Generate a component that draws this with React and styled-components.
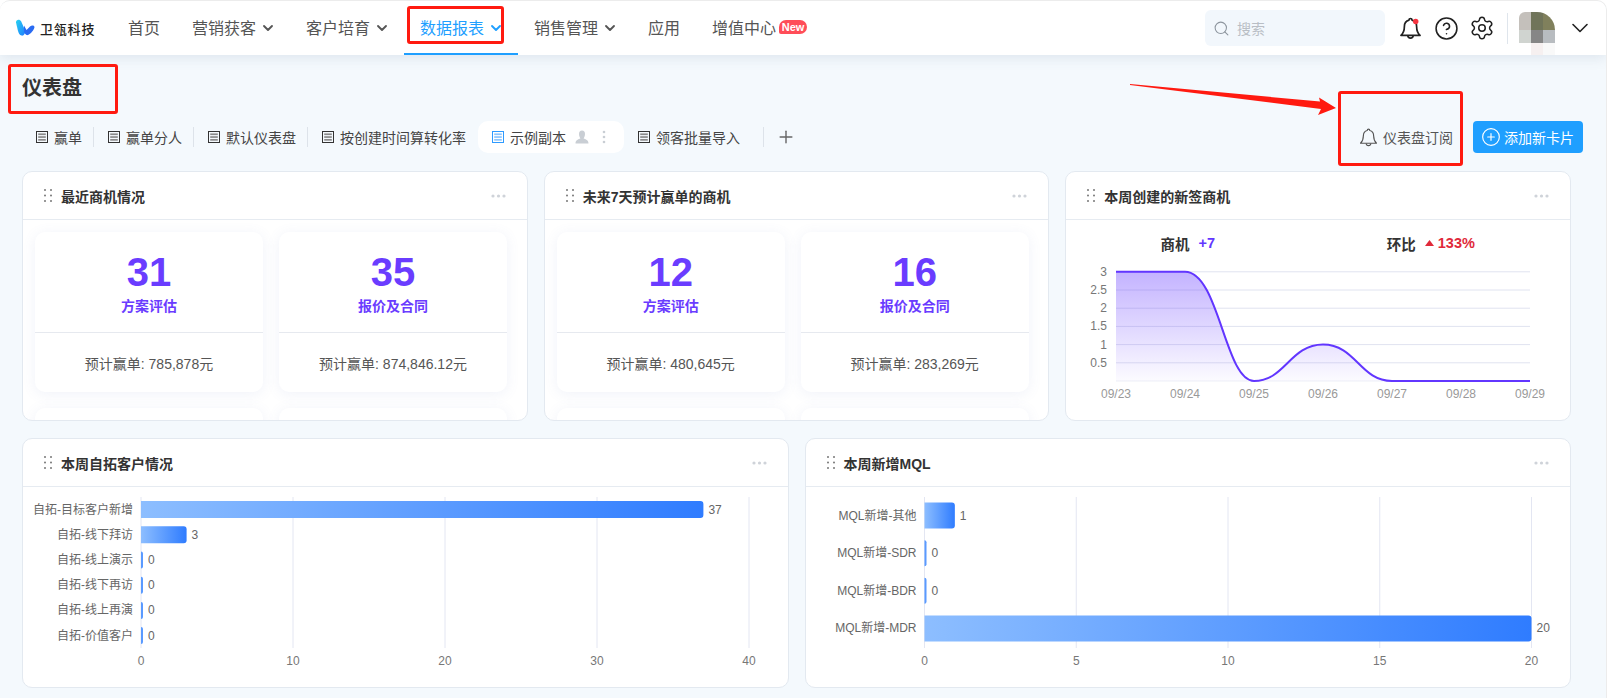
import React from "react";
import styled, { createGlobalStyle } from "styled-components";
import { ChevronDown, CircleHelp, CirclePlus, Plus, Search, Settings } from "lucide-react";

const FONT = '"Liberation Sans", "Noto Sans CJK SC", sans-serif';

const GlobalStyle = createGlobalStyle`
  html, body {
    margin: 0;
    padding: 0;
    background: #fff;
    font-family: ${FONT};
    overflow: hidden;
  }
  * { box-sizing: border-box; }
`;

const navItems = [
  { label: "首页" },
  { label: "营销获客", arrow: true },
  { label: "客户培育", arrow: true },
  { label: "数据报表", arrow: true, active: true },
  { label: "销售管理", arrow: true },
  { label: "应用" },
  { label: "增值中心", badge: "New" }
];

const tabs = [
  { label: "赢单", divider: true },
  { label: "赢单分人", divider: true },
  { label: "默认仪表盘", divider: true },
  { label: "按创建时间算转化率" },
  { label: "示例副本", active: true },
  { label: "领客批量导入" }
];

const recent = [
  { value: 31, stage: "方案评估", amount: "785,878" },
  { value: 35, stage: "报价及合同", amount: "874,846.12" },
  {},
  {}
];

const nextWeek = [
  { value: 12, stage: "方案评估", amount: "480,645" },
  { value: 16, stage: "报价及合同", amount: "283,269" },
  {},
  {}
];

const selfDev = [
  ["自拓-目标客户新增", 37],
  ["自拓-线下拜访", 3],
  ["自拓-线上演示", 0],
  ["自拓-线下再访", 0],
  ["自拓-线上再演", 0],
  ["自拓-价值客户", 0]
];

const mql = [
  ["MQL新增-其他", 1],
  ["MQL新增-SDR", 0],
  ["MQL新增-BDR", 0],
  ["MQL新增-MDR", 20]
];

const Frame = styled.div`
  position: relative;
  width: 1607px;
  height: 698px;
  overflow: hidden;
  background: #f4f9fd;
  border-top: 1px solid #ececec;
  border-right: 1px solid #ececec;
  border-radius: 10px 10px 0 0;
`;

const TopNav = styled.header`
  position: relative;
  z-index: 2;
  display: flex;
  align-items: center;
  height: 54px;
  padding-left: 15px;
  padding-right: 16px;
  background: #fff;
  box-shadow: 0 3px 12px rgba(80, 100, 130, 0.13);
`;

const Brand = styled.div`
  display: flex;
  align-items: center;
  gap: 5px;
  width: 97px;
  font-size: 13px;
  font-weight: 500;
  letter-spacing: 0.8px;
  color: #222;
`;

const NavItem = styled.div`
  display: flex;
  align-items: center;
  height: 54px;
  padding: 0 16px;
  font-size: 16px;
  color: ${(p) => (p.$active ? "#1f9fff" : "#555")};
  border-bottom: 2px solid ${(p) => (p.$active ? "#1f9fff" : "transparent")};
`;

const NavArrow = styled(ChevronDown)`
  flex: none;
  margin: 2px -2px 0 4px;
`;

const NewBadge = styled.span`
  display: flex;
  align-items: center;
  justify-content: center;
  width: 28px;
  height: 14px;
  margin-left: 3px;
  margin-right: -31px;
  border-radius: 7px 7px 7px 2px;
  background: #ff4d58;
  color: #fff;
  font-size: 11px;
  font-weight: 700;
`;

const SearchBox = styled.div`
  display: flex;
  align-items: center;
  gap: 7px;
  width: 180px;
  height: 36px;
  margin-left: auto;
  padding-left: 8px;
  border-radius: 6px;
  background: #f2f7fc;
  color: #b9bec5;
  font-size: 14px;
`;

const IconSlot = styled.div`
  display: flex;
  align-items: center;
  justify-content: center;
  width: 22px;
  height: 22px;
  margin-left: 14px;
  color: #222;

  svg {
    flex: none;
  }
`;

const NavDivider = styled.div`
  width: 1px;
  height: 31px;
  margin-left: 14px;
  background: #dfe5ec;
`;

const Avatar = styled.div`
  display: grid;
  grid-template-columns: repeat(3, 12px);
  grid-template-rows: 18px 13px 12px;
  align-self: flex-end;
  height: 43px;
  margin-left: 11px;
  overflow: hidden;
  border-radius: 6px 18px 0 0;
`;

const AvatarCell = styled.div`
  background: ${(p) => p.$color};
`;

const ChevronSlot = styled.div`
  display: flex;
  justify-content: center;
  width: 20px;
  margin-left: 15px;
  color: #222;

  svg {
    flex: none;
  }
`;

const Main = styled.main`
  padding: 19px 23px 0 22px;
`;

const Heading = styled.h1`
  margin: 0;
  height: 28px;
  line-height: 28px;
  font-size: 20px;
  font-weight: 700;
  color: #333;
`;

const TabRow = styled.div`
  display: flex;
  align-items: center;
  height: 32px;
  margin-top: 19px;
`;

const Tab = styled.div`
  display: flex;
  align-items: center;
  gap: 6px;
  height: 32px;
  margin-left: ${(p) => (p.$active ? "1px" : "0")};
  padding: 0 ${(p) => (p.$active ? "0" : "11px")} 0 14px;
  width: ${(p) => (p.$active ? "146px" : "auto")};
  border-radius: 10px;
  background: ${(p) => (p.$active ? "#fff" : "transparent")};
  font-size: 14px;
  color: #444;
`;

const TabDivider = styled.div`
  width: 1px;
  height: 20px;
  margin-left: ${(p) => p.$gap || 0}px;
  background: #dde3ea;
`;

const TabTools = styled.div`
  display: flex;
  align-items: center;
  margin-left: 3px;
  gap: 13px;
`;

const AddTab = styled(Plus)`
  flex: none;
  margin-left: 12px;
  color: #666;
`;

const Subscribe = styled.div`
  display: flex;
  align-items: center;
  gap: 4px;
  margin-left: auto;
  font-size: 14px;
  color: #555;
`;

const AddButton = styled.button`
  display: flex;
  align-items: center;
  gap: 3px;
  width: 110px;
  height: 32px;
  margin-left: 20px;
  padding: 0 0 0 8px;
  border: 0;
  border-radius: 4px;
  background: #1f9fff;
  color: #fff;
  font-family: inherit;
  font-size: 14px;
`;

const CardRow = styled.section`
  display: grid;
  grid-template-columns: repeat(${(p) => p.$cols}, 1fr);
  gap: 16px;
  height: 250px;
  margin: ${(p) => p.$top}px 12px 0 0;
`;

const Card = styled.article`
  display: flex;
  flex-direction: column;
  min-width: 0;
  overflow: hidden;
  border: 1px solid #e3e9f0;
  border-radius: 10px;
  background: #fff;
`;

const CardHeader = styled.div`
  display: flex;
  flex: none;
  align-items: center;
  gap: 9px;
  height: 48px;
  padding: 0 21px 0 21px;
  border-bottom: 1px solid #e6ebf1;
`;

const CardTitle = styled.h3`
  flex: 1;
  margin: 0;
  font-size: 14px;
  font-weight: 700;
  color: #333;
`;

const TileGrid = styled.div`
  display: grid;
  grid-template-columns: 228px 228px;
  gap: 16px;
  padding: 12px;
`;

const Tile = styled.div`
  height: 160px;
  border-radius: 10px;
  background: #fff;
  box-shadow: 0 2px 14px rgba(90, 110, 190, 0.09);
`;

const TileTop = styled.div`
  height: 101px;
  padding-top: 18px;
  text-align: center;
  border-bottom: 1px solid #e6e9ef;
`;

const TileNumber = styled.div`
  height: 44px;
  line-height: 44px;
  font-size: 40px;
  font-weight: 700;
  color: #6a3cff;
`;

const TileStage = styled.div`
  margin-top: 2px;
  line-height: 20px;
  font-size: 14px;
  font-weight: 700;
  color: #6a3cff;
`;

const TileAmount = styled.div`
  display: flex;
  align-items: center;
  justify-content: center;
  height: 59px;
  font-size: 14px;
  color: #555;
`;

const StatRow = styled.div`
  display: grid;
  flex: none;
  grid-template-columns: 243px 243px;
  height: 46px;
`;

const Stat = styled.div`
  display: flex;
  align-items: center;
  justify-content: center;
  gap: 9px;
  font-size: 14.5px;
  font-weight: 700;
  color: #333;
`;

const StatValue = styled.span`
  display: flex;
  align-items: center;
  gap: 4px;
  color: ${(p) => p.$color};
`;

const ChartSvg = styled.svg`
  display: block;
  flex: none;
  font-family: ${FONT};
  font-size: 12px;
`;

const Annotation = styled.div`
  position: absolute;
  z-index: 5;
  left: ${(p) => p.$x}px;
  top: ${(p) => p.$y}px;
  width: ${(p) => p.$w}px;
  height: ${(p) => p.$h}px;
  border: 3px solid #ff1a10;
  border-radius: 3px;
`;

const ArrowLayer = styled.svg`
  position: absolute;
  z-index: 5;
  left: 1130px;
  top: 80px;
`;

const Logo = () => (
  <svg width="20" height="18" viewBox="0 0 20 18">
    <defs>
      <linearGradient id="logoA" x1="0" y1="0" x2="1" y2="1">
        <stop offset="0" stopColor="#27d3f0" />
        <stop offset="1" stopColor="#1f7dff" />
      </linearGradient>
    </defs>
    <path d="M1 3.5 C1 0 5 0 6.2 2.6 L10 11 C11 14 8.8 17 6.6 16.6 C4.6 16.2 3.6 14 3 12 Z" fill="url(#logoA)" />
    <path d="M9 6.5 L11.5 11 L15 7.5 C16.5 6 19.5 6 19.5 8.2 C19 11 15.5 15 13 16 C11 16.8 9.8 14.5 9 12.5 Z" fill="#2a6bf2" />
  </svg>
);

const BellIcon = ({ size = 22, stroke = "#222", width = 1.5, dot }) => (
  <svg width={size} height={size} viewBox="0 0 22 22" fill="none" stroke={stroke} strokeWidth={width}>
    <path d="M11 2.2 C11.9 2.2 12.3 2.8 12.3 3.6 C15 4.2 16.4 6.6 16.4 9.4 C16.4 13 17.2 15 19.4 17 L2.6 17 C4.8 15 5.6 13 5.6 9.4 C5.6 6.6 7 4.2 9.7 3.6 C9.7 2.8 10.1 2.2 11 2.2 Z" strokeLinejoin="round" />
    <path d="M8.6 17.2 C8.8 20.2 13.2 20.2 13.4 17.2" />
    {dot && <circle cx="15.6" cy="4.8" r="2.4" fill="#f5333f" stroke="none" />}
  </svg>
);

const TabIcon = ({ active }) => {
  const color = active ? "#2f9bff" : "#333";
  const fill = active ? "#8cc6ff" : "#8a8a8a";
  return (
    <svg width="12" height="12" viewBox="0 0 12 12" style={{ flex: "none" }}>
      <rect x="0.5" y="0.5" width="11" height="11" fill="none" stroke={color} />
      <rect x="2.2" y="2.4" width="7.6" height="1.7" fill={fill} />
      <rect x="2.2" y="5.2" width="7.6" height="1.7" fill={fill} />
      <rect x="2.2" y="8" width="7.6" height="1.7" fill={fill} />
    </svg>
  );
};

const UserIcon = () => (
  <svg width="14" height="14" viewBox="0 0 14 14" fill="#c9ced4">
    <path d="M7 0.5 C9 0.5 10 2 10 4 C10 6 9 7.6 8.6 8.4 C10.5 9.2 13.5 9.8 13.5 13.5 L0.5 13.5 C0.5 9.8 3.5 9.2 5.4 8.4 C5 7.6 4 6 4 4 C4 2 5 0.5 7 0.5 Z" />
  </svg>
);

const KebabIcon = () => (
  <svg width="4" height="14" viewBox="0 0 4 14" fill="#c9ced4">
    <circle cx="2" cy="2" r="1.3" />
    <circle cx="2" cy="7" r="1.3" />
    <circle cx="2" cy="12" r="1.3" />
  </svg>
);

const DragHandle = () => (
  <svg width="8" height="13" viewBox="0 0 8 13" fill="#777" style={{ flex: "none" }}>
    {[1, 6.5, 12].map((y) => (
      <g key={y}>
        <circle cx="1" cy={y} r="1" />
        <circle cx="7" cy={y} r="1" />
      </g>
    ))}
  </svg>
);

const MoreDots = () => (
  <svg width="15" height="4" viewBox="0 0 15 4" fill="#cfd3d9">
    <circle cx="2" cy="2" r="1.6" />
    <circle cx="7.5" cy="2" r="1.6" />
    <circle cx="13" cy="2" r="1.6" />
  </svg>
);

const Panel = ({ title, children }) => (
  <Card>
    <CardHeader>
      <DragHandle />
      <CardTitle>{title}</CardTitle>
      <MoreDots />
    </CardHeader>
    {children}
  </Card>
);

const StageTiles = ({ items }) => (
  <TileGrid>
    {items.map((item, i) => (
      <Tile key={i}>
        {item.stage && (
          <>
            <TileTop>
              <TileNumber>{item.value}</TileNumber>
              <TileStage>{item.stage}</TileStage>
            </TileTop>
            <TileAmount>预计赢单: {item.amount}元</TileAmount>
          </>
        )}
      </Tile>
    ))}
  </TileGrid>
);

const TrendChart = () => {
  const yOf = (v) => 115 - v * 36.4;
  const xOf = (i) => 50 + i * 69;
  const line =
    "M50 5.8 L119 5.8 C153 5.8 159 115 188 115 C219 115 224 78.6 257 78.6 C290 78.6 294 115 326 115 L464 115";
  return (
    <ChartSvg width="503" height="154" viewBox="0 0 503 154">
      <defs>
        <linearGradient id="trendFill" x1="0" y1="0" x2="0" y2="1">
          <stop offset="0" stopColor="#6236ff" stopOpacity="0.38" />
          <stop offset="1" stopColor="#6236ff" stopOpacity="0.02" />
        </linearGradient>
      </defs>
      {[0.5, 1, 1.5, 2, 2.5, 3].map((v) => (
        <g key={v}>
          <line x1="50" x2="464" y1={yOf(v)} y2={yOf(v)} stroke="#e0e3f0" />
          <text x="41" y={yOf(v) + 4} textAnchor="end" fill="#777">
            {v}
          </text>
        </g>
      ))}
      <line x1="50" x2="464" y1="115" y2="115" stroke="#eef0f7" />
      <path d={`${line} L50 115 Z`} fill="url(#trendFill)" />
      <path d={line} fill="none" stroke="#6236ff" strokeWidth="2" />
      {["09/23", "09/24", "09/25", "09/26", "09/27", "09/28", "09/29"].map((d, i) => (
        <text key={d} x={xOf(i)} y="132" textAnchor="middle" fill="#999">
          {d}
        </text>
      ))}
    </ChartSvg>
  );
};

const BarChart = ({ id, data, x0, unit, ticks, first, pitch, barH, width }) => {
  return (
    <ChartSvg width={width} height="201" viewBox={`0 0 ${width} 201`}>
      <defs>
        <linearGradient id={id}>
          <stop offset="0" stopColor="#8dbeff" />
          <stop offset="1" stopColor="#2f7cff" />
        </linearGradient>
      </defs>
      {ticks.map((t) => (
        <g key={t}>
          <line x1={x0 + t * unit} x2={x0 + t * unit} y1="10" y2="161" stroke="#e3e6f2" />
          <text x={x0 + t * unit} y="178" textAnchor="middle" fill="#777">
            {t}
          </text>
        </g>
      ))}
      {data.map(([label, value], i) => {
        const cy = first + i * pitch;
        const w = Math.max(value * unit, 2);
        const r = Math.min(3, w);
        const top = cy - barH / 2;
        return (
          <g key={label}>
            <text x={x0 - 8} y={cy + 4} textAnchor="end" fill="#666">
              {label}
            </text>
            <path
              d={`M${x0} ${top} h${w - r} q${r} 0 ${r} ${r} v${barH - 2 * r} q0 ${r} ${-r} ${r} h${r - w} Z`}
              fill={value ? `url(#${id})` : "#5a9aff"}
            />
            <text x={x0 + w + 5} y={cy + 4} fill="#666">
              {value}
            </text>
          </g>
        );
      })}
    </ChartSvg>
  );
};

export default function App() {
  return (
    <>
      <GlobalStyle />
      <Frame>
        <TopNav>
          <Brand>
            <Logo />
            卫瓴科技
          </Brand>
          {navItems.map((item) => (
            <NavItem key={item.label} $active={item.active}>
              {item.label}
              {item.arrow && <NavArrow size={16} strokeWidth={2.8} />}
              {item.badge && <NewBadge>{item.badge}</NewBadge>}
            </NavItem>
          ))}
          <SearchBox>
            <Search size={17} strokeWidth={1.5} color="#8d959e" />
            搜索
          </SearchBox>
          <IconSlot>
            <BellIcon size={25} dot />
          </IconSlot>
          <IconSlot>
            <CircleHelp size={25} strokeWidth={1.5} />
          </IconSlot>
          <IconSlot>
            <Settings size={26} strokeWidth={1.4} />
          </IconSlot>
          <NavDivider />
          <Avatar>
            {["#c4c0bb", "#70745a", "#80805c", "#d0d4d0", "#868686", "#b8bcc0", "#fff", "#f6f0f0", "#f9f9f9"].map(
              (c, i) => (
                <AvatarCell key={i} $color={c} />
              )
            )}
          </Avatar>
          <ChevronSlot>
            <ChevronDown size={28} strokeWidth={1.4} />
          </ChevronSlot>
        </TopNav>

        <Main>
          <Heading>仪表盘</Heading>
          <TabRow>
            {tabs.map((tab) => (
              <React.Fragment key={tab.label}>
                <Tab $active={tab.active}>
                  <TabIcon active={tab.active} />
                  {tab.label}
                  {tab.active && (
                    <TabTools>
                      <UserIcon />
                      <KebabIcon />
                    </TabTools>
                  )}
                </Tab>
                {tab.divider && <TabDivider />}
              </React.Fragment>
            ))}
            <TabDivider $gap={12} />
            <AddTab size={20} strokeWidth={1.7} />
            <Subscribe>
              <BellIcon size={21} stroke="#555" width={1.2} />
              仪表盘订阅
            </Subscribe>
            <AddButton>
              <CirclePlus size={20} strokeWidth={1.4} />
              添加新卡片
            </AddButton>
          </TabRow>

          <CardRow $cols={3} $top={18}>
            <Panel title="最近商机情况">
              <StageTiles items={recent} />
            </Panel>
            <Panel title="未来7天预计赢单的商机">
              <StageTiles items={nextWeek} />
            </Panel>
            <Panel title="本周创建的新签商机">
              <StatRow>
                <Stat>
                  商机 <StatValue $color="#6236ff">+7</StatValue>
                </Stat>
                <Stat>
                  环比
                  <StatValue $color="#e0293a">
                    <svg width="9" height="6" viewBox="0 0 9 6" fill="#e0293a">
                      <path d="M4.5 0 L9 6 L0 6 Z" />
                    </svg>
                    133%
                  </StatValue>
                </Stat>
              </StatRow>
              <TrendChart />
            </Panel>
          </CardRow>

          <CardRow $cols={2} $top={17}>
            <Panel title="本周自拓客户情况">
              <BarChart
                id="barLeft"
                data={selfDev}
                x0={118}
                unit={15.2}
                ticks={[0, 10, 20, 30, 40]}
                first={22.6}
                pitch={25.2}
                barH={17}
                width={764}
              />
            </Panel>
            <Panel title="本周新增MQL">
              <BarChart
                id="barRight"
                data={mql}
                x0={118.5}
                unit={30.35}
                ticks={[0, 5, 10, 15, 20]}
                first={28.6}
                pitch={37.6}
                barH={26}
                width={764}
              />
            </Panel>
          </CardRow>
        </Main>

        <Annotation $x={407} $y={5} $w={97} $h={38} />
        <Annotation $x={8} $y={63} $w={110} $h={50} />
        <Annotation $x={1338} $y={90} $w={125} $h={75} />
        <ArrowLayer width="212" height="40" viewBox="0 0 212 40">
          <polygon points="0,3 190,20.5 189,16.5 206,27 188,34 191,28 0,4" fill="#ff1a10" />
        </ArrowLayer>
      </Frame>
    </>
  );
}
